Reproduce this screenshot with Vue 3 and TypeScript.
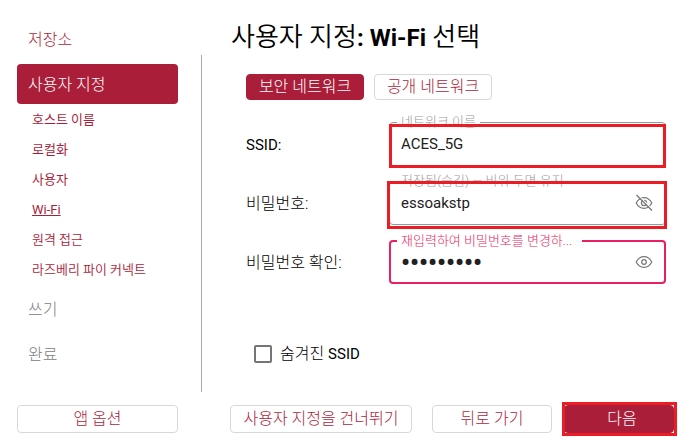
<script setup lang="ts">
import { ref } from 'vue'

interface Step {
  label: string
  state: 'done' | 'active' | 'pending'
  children?: { label: string; light?: boolean; current?: boolean }[]
}

const steps: Step[] = [
  { label: '저장소', state: 'done' },
  {
    label: '사용자 지정',
    state: 'active',
    children: [
      { label: '호스트 이름' },
      { label: '로컬화' },
      { label: '사용자' },
      { label: 'Wi-Fi', current: true },
      { label: '원격 접근', light: true },
      { label: '라즈베리 파이 커넥트', light: true },
    ],
  },
  { label: '쓰기', state: 'pending' },
  { label: '완료', state: 'pending' },
]

const secure = ref(true)
const ssid = ref('ACES_5G')
const password = ref('essoakstp')
const confirmation = ref('essoakstp')
const showPassword = ref(true)
const showConfirmation = ref(false)
const hidden = ref(false)
</script>

<template>
  <div class="window">
    <div class="body">
      <nav class="sidebar">
        <template v-for="step in steps" :key="step.label">
          <a href="#" class="step" :class="step.state">{{ step.label }}</a>
          <div v-if="step.children" class="children">
            <a
              v-for="child in step.children"
              :key="child.label"
              href="#"
              class="child"
              :class="{ current: child.current, light: child.light }"
            >{{ child.label }}</a>
          </div>
        </template>
      </nav>

      <main class="content">
        <h1>사용자 지정<b>: Wi-Fi</b> 선택</h1>
        <div class="tabs">
          <button type="button" class="btn" :class="{ primary: secure }" @click="secure = true">보안 네트워크</button>
          <button type="button" class="btn" :class="{ primary: !secure }" @click="secure = false">공개 네트워크</button>
        </div>

        <form class="form" @submit.prevent>
          <label for="ssid" class="latin">SSID:</label>
          <div class="field marked">
            <span class="hint">네트워크 이름</span>
            <input id="ssid" v-model="ssid" type="text">
          </div>

          <label for="password">비밀번호:</label>
          <div class="field marked wide">
            <span class="hint">저장됨(숨김) — 비워 두면 유지</span>
            <input id="password" v-model="password" :type="showPassword ? 'text' : 'password'">
            <button type="button" class="eye" aria-label="비밀번호" @click="showPassword = !showPassword">
              <svg viewBox="0 0 18 18" width="18" height="18">
                <path d="M1.2 9C3 5.600 5.800 3.700 9 3.700S15 5.600 16.800 9C15 12.400 12.200 14.300 9 14.300S3 12.400 1.200 9Z" />
                <circle cx="9" cy="9" r="2.600" />
                <path class="gap" d="M2.700 .7L17.700 15.700" />
                <path d="M1.500 1L17 16.500" />
              </svg>
            </button>
          </div>

          <label for="confirmation">비밀번호 확인:</label>
          <div class="field focus">
            <span class="hint">재입력하여 비밀번호를 변경하...</span>
            <input id="confirmation" v-model="confirmation" :type="showConfirmation ? 'text' : 'password'">
            <button type="button" class="eye" aria-label="비밀번호 확인" @click="showConfirmation = !showConfirmation">
              <svg viewBox="0 0 18 18" width="18" height="18">
                <path d="M1.200 9C3 5.600 5.800 3.700 9 3.700S15 5.600 16.800 9C15 12.400 12.200 14.300 9 14.300S3 12.400 1.200 9Z" />
                <circle cx="9" cy="9" r="2.300" />
              </svg>
            </button>
          </div>
        </form>

        <label class="check">
          <input v-model="hidden" type="checkbox">
          <span>숨겨진 <span class="latin">SSID</span></span>
        </label>
      </main>
    </div>

    <footer class="footer">
      <button type="button" class="btn options">앱 옵션</button>
      <div class="actions">
        <button type="button" class="btn skip">사용자 지정을 건너뛰기</button>
        <button type="button" class="btn back">뒤로 가기</button>
        <button type="button" class="btn primary next">다음</button>
      </div>
    </footer>
  </div>
</template>

<style>
body {
  background: #fff;
}
</style>

<style scoped>
.window {
  --brand: #aa1e3a;
  --mark: #ec1c24;
  box-sizing: border-box;
  min-height: 100vh;
  display: flex;
  flex-direction: column;
  padding: 0 4px 13px 17px;
  font: 300 16px/24px Roboto, "Noto Sans CJK KR", sans-serif;
  color: #000;
}

.window *,
.window *::before,
.window *::after {
  box-sizing: border-box;
}

.body {
  flex: 1;
  display: grid;
  grid-template-columns: 161px minmax(0, 1fr);
  column-gap: 23px;
}

.sidebar {
  display: flex;
  flex-direction: column;
  gap: 5px;
  padding-top: 19px;
}

.step {
  display: block;
  padding: 1px 11px 0;
  border-radius: 4px;
  line-height: 39px;
  color: var(--brand);
  text-decoration: none;
}

.step.active {
  background: var(--brand);
  color: #fff;
}

.step.pending {
  color: #808080;
}

.children {
  display: flex;
  flex-direction: column;
  margin-top: -5px;
  padding-left: 15px;
}

.child {
  padding-top: 2px;
  font-size: 13px;
  font-weight: 400;
  line-height: 28px;
  color: var(--brand);
  text-decoration: none;
}

.child.light {
  font-weight: 350;
}

.child.current {
  text-decoration: underline;
}

.content {
  position: relative;
  padding: 18px 8px 0 30px;
}

.content::before {
  content: "";
  position: absolute;
  left: 0;
  top: 55px;
  bottom: 13px;
  width: 1px;
  background: #a8a8a8;
}

h1 {
  margin: 0;
  font-size: 26px;
  font-weight: 350;
  line-height: 38px;
}

h1 b {
  font-size: 24px;
  font-weight: 700;
  line-height: 24px;
}

.tabs {
  display: flex;
  gap: 10px;
  margin: 18px 0 22px 15px;
}

.btn {
  height: 28px;
  padding: 0 11px;
  border: 1px solid #d8d8d8;
  border-radius: 4px;
  background: #fff;
  font: inherit;
  line-height: 24px;
  color: var(--brand);
  white-space: nowrap;
}

.btn.primary {
  border-color: var(--brand);
  background: var(--brand);
  color: #fff;
}

.tabs .btn {
  width: 118px;
  height: 26px;
  padding: 0;
}

.form {
  display: grid;
  grid-template-columns: 143px minmax(0, 1fr);
  row-gap: 15px;
  align-items: center;
  padding-left: 15px;
}

.form label {
  padding-top: 2px;
}

.latin {
  font-size: 15px;
  font-weight: 400;
  line-height: 20px;
}

.field {
  position: relative;
  display: flex;
  align-items: center;
  height: 44px;
  padding: 0 12px 0 11px;
  border: 1px solid #999;
  border-radius: 4px;
}

.field.focus {
  padding: 0 11px 0 10px;
  border: 2px solid #e91e63;
}

.field input {
  flex: 1;
  min-width: 0;
  height: 24px;
  padding: 0;
  border: 0;
  outline: 0;
  background: transparent;
  font: 400 15px/24px Roboto, "Noto Sans CJK KR", sans-serif;
  color: #212121;
}

.field input[type="password"] {
  font-size: 25px;
  font-weight: 700;
}

.hint {
  position: absolute;
  left: 7px;
  top: -11px;
  padding: 0 4px;
  background: #fff;
  font-size: 13px;
  line-height: 20px;
  color: #999;
  white-space: nowrap;
}

.focus .hint {
  left: 6px;
  padding-right: 10px;
  color: #e91e63;
}

.marked::after,
.next::after {
  content: "";
  position: absolute;
  inset: 1px -1px -3px;
  border: 3px solid var(--mark);
  pointer-events: none;
}

.marked.wide::after {
  inset: -1px -2px -5px -3px;
}

.eye {
  display: flex;
  padding: 0;
  border: 0;
  background: none;
}

.eye svg {
  fill: none;
  stroke: #777;
  stroke-width: 1.200;
}

.eye .gap {
  stroke: #fff;
}

.check {
  display: inline-flex;
  align-items: center;
  gap: 8px;
  margin: 58px 0 0 23px;
}

.check input {
  appearance: none;
  width: 18px;
  height: 18px;
  margin: 0;
  border: 2px solid #757575;
  border-radius: 2px;
}

.check input:checked {
  background: var(--brand);
}

.footer {
  display: flex;
  justify-content: space-between;
}

.options {
  width: 161px;
}

.actions {
  display: flex;
}

.skip {
  width: 182px;
  margin-right: 20px;
}

.back {
  width: 120px;
  margin-right: 12px;
}

.next {
  position: relative;
  width: 110px;
  padding: 0 8px 0 14px;
}

.next::after {
  inset: -4px -4px -4px -3px;
}
</style>
